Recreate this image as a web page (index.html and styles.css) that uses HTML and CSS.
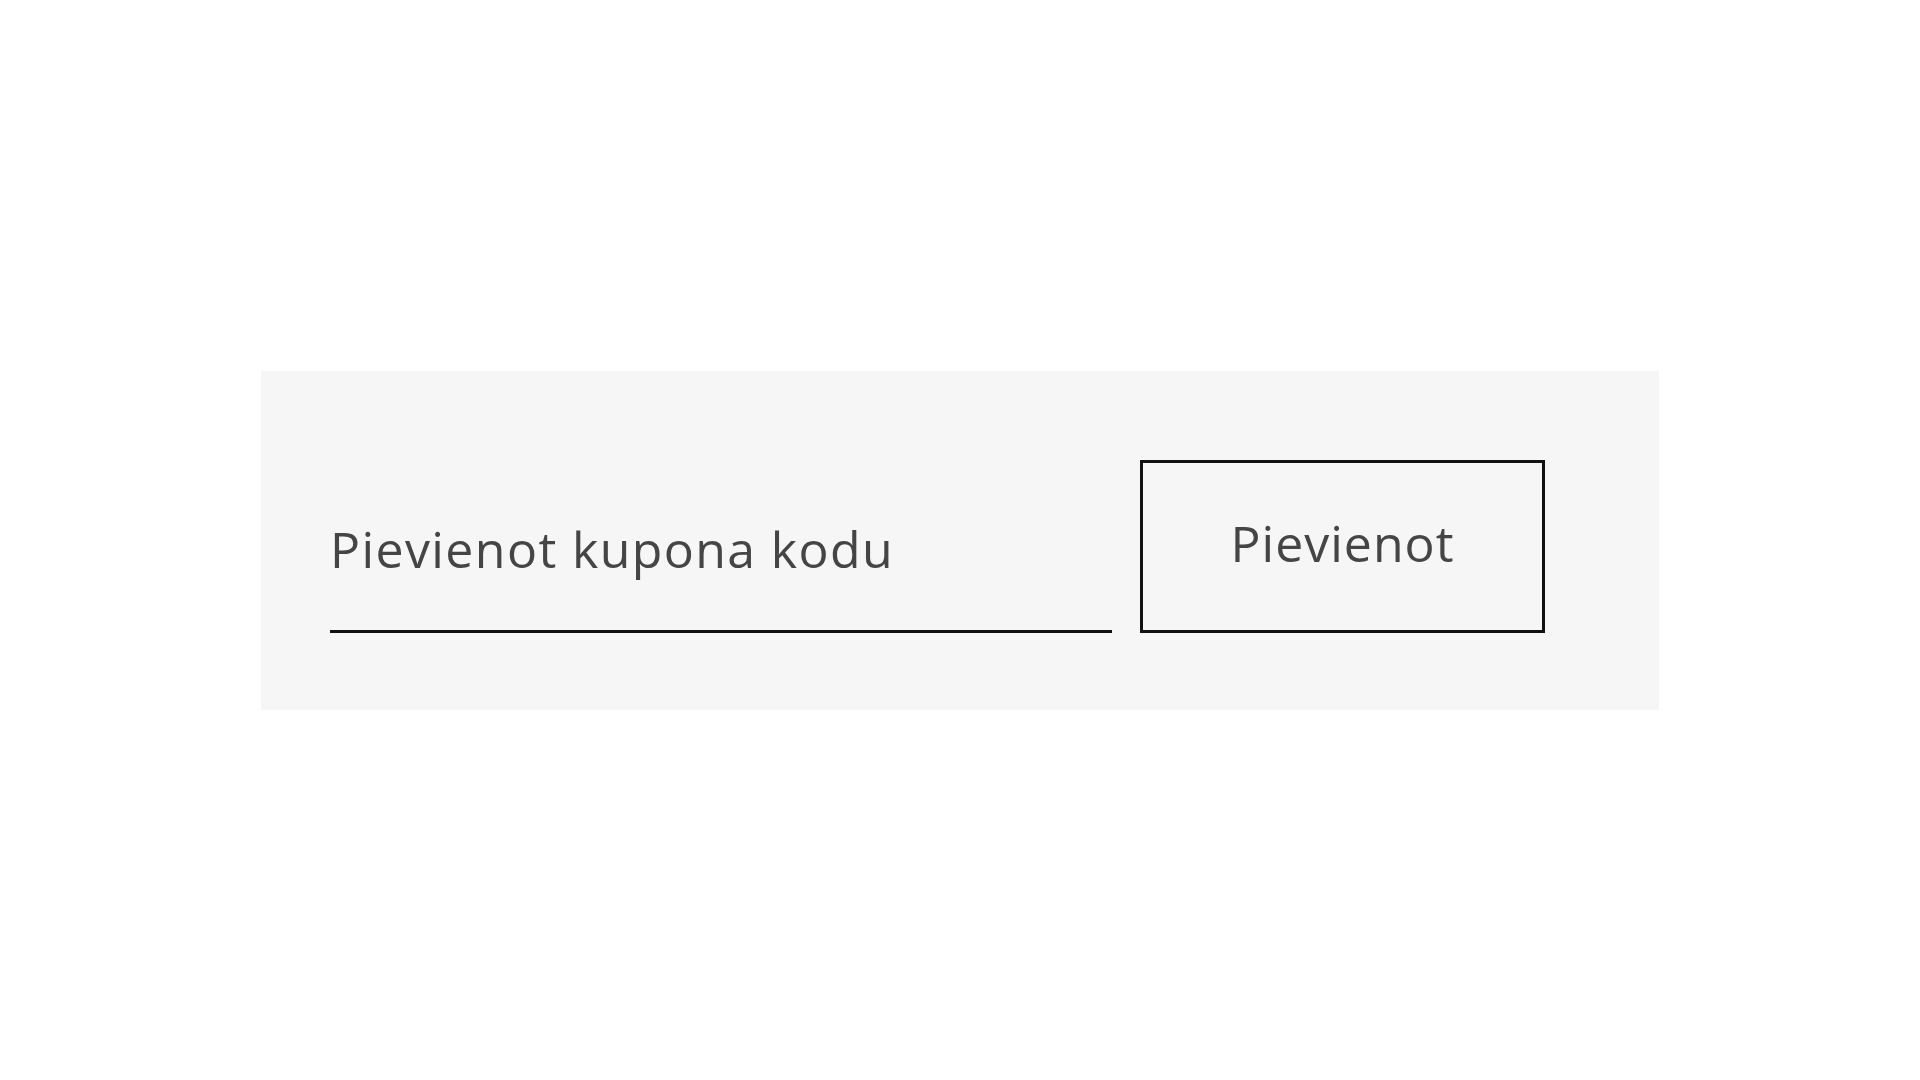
FILE: index.html
```html
<!DOCTYPE html>
<html lang="lv">
<head>
    <meta charset="UTF-8">
    <meta name="viewport" content="width=device-width, initial-scale=1.0">
    <title>Kupons</title>
    <link rel="stylesheet" href="styles.css">
</head>
<body>
    <form class="coupon">
        <input class="coupon-input" type="text" placeholder="Pievienot kupona kodu">
        <button class="coupon-button" type="button">Pievienot</button>
    </form>
</body>
</html>
```

FILE: styles.css
```css
body {
    font-family: "Open Sans", Arial, sans-serif;
    background-color: #ffffff;
    margin: 0;
    padding: 0;
    display: flex;
    justify-content: center;
    align-items: center;
    height: 100vh;
}
.coupon {
    width: 1398px;
    height: 339px;
    box-sizing: border-box;
    padding: 89px 114px 77px 69px;
    background-color: #f6f6f6;
    display: flex;
    align-items: flex-end;
    gap: 28px;
}
.coupon-input {
    width: 782px;
    height: 120px;
    box-sizing: border-box;
    padding: 0 0 44px 0;
    border: none;
    border-bottom: 3px solid #111111;
    background: transparent;
    font-family: "Open Sans", Arial, sans-serif;
    font-size: 50px;
    letter-spacing: 1.4px;
    color: #333333;
    outline: none;
}
.coupon-input::placeholder {
    color: #454545;
}
.coupon-button {
    width: 405px;
    height: 173px;
    box-sizing: border-box;
    border: 3px solid #111111;
    background-color: #f6f6f6;
    font-family: "Open Sans", Arial, sans-serif;
    font-size: 50px;
    letter-spacing: 1px;
    color: #454545;
    padding: 0 0 6px 0;
    cursor: pointer;
}
```
